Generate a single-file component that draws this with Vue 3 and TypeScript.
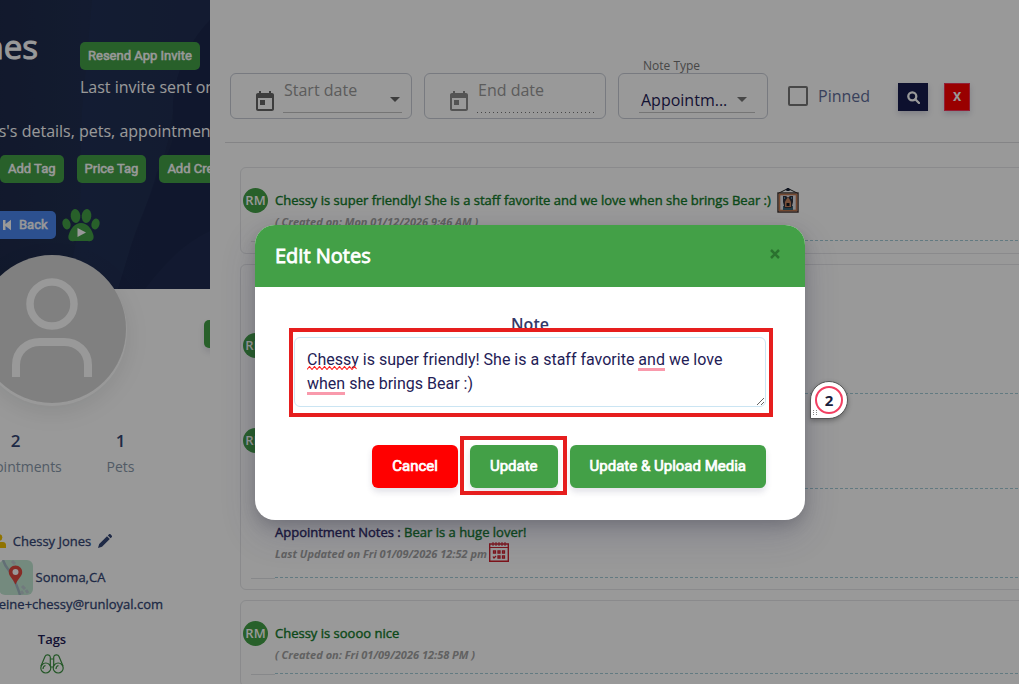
<script setup lang="ts">
import { ref } from 'vue'

interface Entry {
  kind: 'plain' | 'first' | 'middle' | 'last'
  avatar: boolean
  prefix?: string
  title?: string
  meta?: string
  icon?: 'frame' | 'calendar'
}

const cards: Entry[][] = [
  [
    {
      kind: 'plain',
      avatar: true,
      title: 'Chessy is super friendly! She is a staff favorite and we love when she brings Bear :)',
      meta: '( Created on: Mon 01/12/2026 9:46 AM )',
      icon: 'frame',
    },
  ],
  [
    { kind: 'first', avatar: true },
    { kind: 'middle', avatar: true },
    {
      kind: 'last',
      avatar: false,
      prefix: 'Appointment Notes : ',
      title: 'Bear is a huge lover!',
      meta: 'Last Updated on Fri 01/09/2026 12:52 pm',
      icon: 'calendar',
    },
  ],
  [
    {
      kind: 'plain',
      avatar: true,
      title: 'Chessy is soooo nice',
      meta: '( Created on: Fri 01/09/2026 12:58 PM )',
    },
  ],
]

const startDate = ref('')
const endDate = ref('')
const pinned = ref(false)
const note = ref('Chessy is super friendly! She is a staff favorite and we love when she brings Bear :)')
</script>

<template>
  <div class="page">
    <aside class="sidebar">
      <div class="sidebar-inner">
        <header class="hero">
          <svg class="hero-art" viewBox="0 0 210 289" preserveAspectRatio="none" aria-hidden="true">
            <path d="M92 0h118v20C185 45 172 85 173 110c-6 60-32 100-43 139l-12 40H60C88 240 78 170 82 110z" fill="#24345a" opacity=".45" />
            <path d="M210 20C185 45 172 85 173 110c0 22 5 30-16 62-8 30-20 55-27 78l-12 39h92z" fill="#1b274c" opacity=".8" />
            <path d="M145 289c20-26 38-45 65-58v58z" fill="#222f54" opacity=".5" />
          </svg>
          <div class="hero-top">
            <h1>Jones</h1>
            <div class="invite">
              <button type="button" class="btn">Resend App Invite</button>
              <p>Last invite sent on</p>
            </div>
          </div>
          <p class="hero-text">Jones's details, pets, appointments</p>
          <div class="row tags-row">
            <button type="button" class="btn">Add Tag</button>
            <button type="button" class="btn">Price Tag</button>
            <button type="button" class="btn">Add Credit</button>
          </div>
          <div class="row back-row">
            <button type="button" class="btn blue">
              <svg width="9" height="12" viewBox="0 0 9 12" aria-hidden="true"><path d="M0 1h2.500v4L8 .8v10.400L2.500 7v4H0z" fill="#fff" /></svg>
              Back
            </button>
            <svg class="paw" width="38" height="34" viewBox="0 0 38 34" aria-hidden="true">
              <g fill="#43a047">
                <ellipse cx="13.500" cy="8" rx="4.800" ry="7" transform="rotate(-6 13.500 8)" />
                <ellipse cx="24.500" cy="8" rx="4.800" ry="7" transform="rotate(6 24.500 8)" />
                <ellipse cx="4.500" cy="16" rx="4" ry="5.500" transform="rotate(-15 4.500 16)" />
                <ellipse cx="33.500" cy="16" rx="4" ry="5.500" transform="rotate(15 33.500 16)" />
                <path d="M19 15c6 0 10 5 12 11 2 5-1 8-5 7H12c-4 1-7-2-5-7 2-6 6-11 12-11z" />
              </g>
              <path d="M15.500 20l8.500 4.500-8.500 4.500z" fill="#fff" />
            </svg>
          </div>
        </header>

        <div class="portrait">
          <svg viewBox="0 0 148 148" aria-hidden="true">
            <circle cx="74" cy="74" r="74" fill="#d6d6d6" />
            <circle cx="74" cy="49" r="22" fill="none" stroke="#fff" stroke-width="7.500" />
            <path d="M38 122v-12c0-14 11-23 24-23h24c13 0 24 9 24 23v12" fill="none" stroke="#fff" stroke-width="8" />
          </svg>
        </div>
        <button type="button" class="edge-btn" aria-label="Open"></button>

        <dl class="stats">
          <div><dd>2</dd><dt>Appointments</dt></div>
          <div><dd>1</dd><dt>Pets</dt></div>
        </dl>

        <div class="details">
          <div class="line name">
            <svg width="14" height="14" viewBox="0 0 14 14" aria-hidden="true"><circle cx="7" cy="3.500" r="3.300" fill="#f0c000" /><path d="M0 14v-3c0-2 1.500-3 3-3h8c1.500 0 3 1 3 3v3z" fill="#f0c000" /></svg>
            <span>Chessy Jones</span>
            <svg width="14" height="14" viewBox="0 0 14 14" aria-hidden="true"><path d="M9 2.300l2.800 2.800L4 12.800 0 14l1.200-4zM9.800 1.500l1-1c.6-.6 1.300-.6 1.900 0l.9.900c.6.600.6 1.300 0 1.900l-1 1z" fill="#344675" /></svg>
          </div>
          <div class="line place">
            <svg width="34" height="35" viewBox="0 0 34 35" aria-hidden="true">
              <rect width="34" height="35" rx="6" fill="#c2e6d3" />
              <path d="M4 0c3 9 7 10 10 17s5 11 7 18" stroke="#a4b8c4" stroke-width="2.500" fill="none" />
              <path d="M13 1l3 3M23 26l3 3M27 30l2 3M22 31l2 3" stroke="#bccbd0" stroke-width="3" />
              <path d="M16.500 5.500c-4 0-6.700 3-6.700 6.700 0 4 4 6 6.700 12.300 2.700-6.300 6.700-8.300 6.700-12.300 0-3.700-2.700-6.700-6.700-6.700z" fill="#e0483e" />
              <circle cx="16.500" cy="12" r="3" fill="#fff" />
            </svg>
            <span>Sonoma,CA</span>
          </div>
          <a class="line mail" href="mailto:madeleine+chessy@runloyal.com">madeleine+chessy@runloyal.com</a>
          <h2>Tags</h2>
          <svg class="binoculars" width="24" height="20" viewBox="0 0 24 20" fill="none" stroke="#3d9142" stroke-width="1.200" aria-hidden="true">
            <circle cx="5.800" cy="14" r="5" />
            <circle cx="18.200" cy="14" r="5" />
            <path d="M1 12L5 2.500C6 0 10 .5 10.300 3v9M23 12l-4-9.500C18 0 14 .5 13.700 3v9M10.500 5h3M10.800 13h2.400M3 15c0-2 1-3 2.500-3.500M16 15c0-2 1-3 2.500-3.500" />
          </svg>
        </div>
      </div>
    </aside>

    <main class="main">
      <form class="filters" @submit.prevent>
        <label class="field">
          <svg class="cal" width="18" height="20" viewBox="0 0 18 20" aria-hidden="true"><path fill-rule="evenodd" d="M3 0h2v2h8V0h2v2h1c1.100 0 2 .9 2 2v14c0 1.100-.9 2-2 2H2c-1.100 0-2-.9-2-2V4c0-1.100.9-2 2-2h1zM2 7v11h14V7zM4 9h5v5H4z" fill="currentColor" /></svg>
          <input v-model="startDate" type="text" placeholder="Start date" aria-label="Start date" />
          <svg class="caret" width="10" height="5" viewBox="0 0 10 5" aria-hidden="true"><path d="M0 0h10L5 5z" fill="#666" /></svg>
        </label>
        <label class="field disabled">
          <svg class="cal" width="18" height="20" viewBox="0 0 18 20" aria-hidden="true"><path fill-rule="evenodd" d="M3 0h2v2h8V0h2v2h1c1.100 0 2 .9 2 2v14c0 1.100-.9 2-2 2H2c-1.100 0-2-.9-2-2V4c0-1.100.9-2 2-2h1zM2 7v11h14V7zM4 9h5v5H4z" fill="currentColor" /></svg>
          <input v-model="endDate" type="text" placeholder="End date" aria-label="End date" />
          <i class="dots"></i>
        </label>
        <div class="field type-field">
          <label for="note-type">Note Type</label>
          <select id="note-type"><option>Appointm...</option></select>
          <svg class="caret" width="10" height="5" viewBox="0 0 10 5" aria-hidden="true"><path d="M0 0h10L5 5z" fill="#777" /></svg>
        </div>
        <label class="pinned"><input v-model="pinned" type="checkbox" />Pinned</label>
        <button type="submit" class="square search" aria-label="Search">
          <svg width="13" height="13" viewBox="0 0 13 13" fill="none" stroke="#fff" stroke-width="2.300" aria-hidden="true"><circle cx="5.300" cy="5.300" r="4" /><path d="M8.300 8.300L12 12" stroke-linecap="round" /></svg>
        </button>
        <button type="reset" class="square clear">X</button>
      </form>

      <div class="notes">
        <section v-for="(card, c) in cards" :key="c" class="card">
          <article v-for="(entry, e) in card" :key="e" class="entry" :class="entry.kind">
            <span v-if="entry.avatar" class="initials">RM</span>
            <div class="entry-body">
              <p class="entry-title">
                <template v-if="entry.title"><span class="prefix">{{ entry.prefix }}</span>{{ entry.title }}</template>
                <svg v-if="entry.icon === 'frame'" class="frame" width="22" height="25" viewBox="0 0 22 25" aria-hidden="true">
                  <path d="M2 5l7-3.500h4L20 5" fill="none" stroke="#222" stroke-width="1" />
                  <path d="M8.500 2l1.500-2h2l1.500 2-1.500 1h-2z" fill="#182235" />
                  <rect x="1" y="5" width="20" height="19" fill="#e4e4ea" stroke="#382b28" stroke-width="1.400" />
                  <rect x="2.500" y="6.500" width="17" height="16" fill="none" stroke="#c47a50" stroke-width="1.600" />
                  <path d="M6 22v-4h10v4z" fill="#3b6678" />
                  <path d="M6 8h3l2 1.500L13 8h3v6l-1.500 6h-7L6 14z" fill="#31313c" />
                  <path d="M9 12l2-3 2 3 1 2v5H8v-5z" fill="#c98560" />
                  <path d="M9.500 15h3v3h-3z" fill="#15151b" />
                  <path d="M7 9h1v2H7zM14 9h1v2h-1z" fill="#4e88aa" />
                </svg>
              </p>
              <p class="entry-meta">
                {{ entry.meta }}
                <svg v-if="entry.icon === 'calendar'" class="agenda" width="20" height="20" viewBox="0 0 20 20" fill="none" stroke="#d0202c" aria-hidden="true">
                  <path d="M.7 2h18.600v17.300H.7z" stroke-width="1.400" />
                  <path d="M1 5.500h18M4 0v4M7 0v4M10 0v4M13 0v4M16 0v4" />
                  <path d="M4.500 9h2v2h-2zM9 9h2v2H9zM13.500 9h2v2h-2zM9 14h2v2H9zM13.500 14h2v2h-2zM4 14.500l1 1.500 2-2" stroke-width="1.300" />
                </svg>
              </p>
            </div>
          </article>
        </section>
      </div>
    </main>

    <div class="backdrop"></div>

    <div class="dialog" role="dialog" aria-labelledby="dialog-title">
      <header class="dialog-head">
        <h2 id="dialog-title">Edit Notes</h2>
        <button type="button" class="close" aria-label="Close">
          <svg width="10" height="10" viewBox="0 0 10 10" aria-hidden="true"><path d="M1 1l8 8M9 1L1 9" stroke="#2b722f" stroke-width="2.500" /></svg>
        </button>
      </header>
      <form class="dialog-body" @submit.prevent>
        <label for="note">Note</label>
        <div class="editor">
          <textarea id="note" v-model="note" spellcheck="false" rows="2"></textarea>
          <svg class="squiggle" width="52" height="4" viewBox="0 0 52 4" aria-hidden="true"><path d="M0 3.500L2.500.5 5 3.500 7.500.5l2.500 3 2.500-3 2.500 3 2.500-3 2.500 3 2.500-3 2.500 3 2.500-3 2.500 3 2.500-3 2.500 3 2.500-3 2.500 3 2.500-3 2.500 3 2.500-3 2 2.500" fill="none" stroke="#f22" stroke-width="1.100" /></svg>
          <i class="mark mark-and"></i>
          <i class="mark mark-when"></i>
          <i class="outline outline-note"></i>
        </div>
        <div class="actions">
          <button type="button" class="action cancel">Cancel</button>
          <div class="update-wrap">
            <button type="submit" class="action">Update</button>
            <i class="outline outline-update"></i>
          </div>
          <button type="button" class="action">Update &amp; Upload Media</button>
        </div>
      </form>
      <div class="step">
        <span>2</span>
        <svg width="4" height="6" viewBox="0 0 4 6" aria-hidden="true"><path d="M0 0h1v1H0zM3 0h1v1H3zM0 2h1v1H0zM3 2h1v1H3zM0 4h1v1H0zM3 4h1v1H3z" fill="#888" /></svg>
      </div>
    </div>
  </div>
</template>

<style>
body {
  margin: 0;
  background: #fff;
}
</style>

<style scoped>
.page {
  position: relative;
  display: flex;
  height: 100vh;
  overflow: hidden;
  background: #fff;
  font-family: "Open Sans", "Noto Sans", sans-serif;
  font-size: 16px;
  color: #1f2156;
}
h1, h2, p, dl, dd { margin: 0; }
button, input, select, textarea { font: inherit; box-sizing: border-box; }
button { border: 0; cursor: pointer; }

.sidebar {
  flex: none;
  width: 210px;
  overflow: hidden;
}
.sidebar-inner {
  position: relative;
  width: 316px;
  margin-left: -106px;
}
.hero {
  position: relative;
  box-sizing: border-box;
  height: 289px;
  padding-top: 26px;
  background: linear-gradient(90deg, #1b2644, #202e50 60%, #1e2a4c);
  color: #fff;
  white-space: nowrap;
}
.hero-art {
  position: absolute;
  right: 0;
  top: 0;
  width: 210px;
  height: 289px;
}
.hero-top {
  position: relative;
  display: grid;
  grid-template-columns: 144px 1fr;
  column-gap: 42px;
  height: 92px;
}
.hero h1 {
  font-size: 33px;
  line-height: 42px;
  font-weight: 400;
  text-align: right;
  -webkit-text-stroke: 1px currentColor;
}
.invite { padding-top: 16px; }
.invite p {
  margin-top: 5px;
  line-height: 24px;
}
.hero-text {
  position: relative;
  display: flex;
  justify-content: flex-end;
  margin-right: -14px;
  line-height: 26px;
}
.row {
  position: relative;
  display: flex;
  padding-left: 106px;
}
.tags-row { gap: 13px; margin-top: 11px; }
.back-row { gap: 6px; margin-top: 28px; padding-left: 101px; }
.btn {
  flex: none;
  height: 28px;
  padding: 0 8px;
  border-radius: 5px;
  background: #43a047;
  color: #fff;
  font: 400 13px/28px Roboto, sans-serif;
  -webkit-text-stroke: 0.5px currentColor;
}
.btn.blue {
  display: flex;
  align-items: center;
  gap: 7px;
  background: #4a86ee;
}
.paw { margin-top: -3px; }

.portrait {
  position: relative;
  width: 148px;
  height: 148px;
  margin: -34px auto 0;
  border-radius: 50%;
  box-shadow: 0 2px 0 1px #fff, 0 8px 24px rgba(0, 20, 20, .1);
}
.portrait svg { display: block; }
.edge-btn {
  position: absolute;
  right: -24px;
  top: 320px;
  width: 30px;
  height: 28px;
  border-radius: 5px;
  background: #43a047;
  box-shadow: 0 4px 6px rgba(50, 50, 93, .14);
}
.stats {
  display: grid;
  grid-template-columns: 105px 105px;
  margin: 26px 0 0 69px;
  text-align: center;
}
.stats dd {
  font-size: 17px;
  line-height: 24px;
  font-weight: 600;
  color: #344675;
}
.stats dt {
  margin-top: 2px;
  font-size: 14px;
  line-height: 24px;
  color: #8898aa;
}
.details {
  display: flex;
  flex-direction: column;
  align-items: center;
  margin-top: 50px;
  font-size: 13px;
  color: #344675;
}
.line {
  display: flex;
  align-items: center;
  -webkit-text-stroke: 0.3px currentColor;
}
.name { gap: 7px; height: 24px; }
.place { gap: 3px; height: 34px; margin-top: 7px; }
.mail {
  height: 20px;
  padding-left: 20px;
  color: inherit;
  text-decoration: none;
}
.details h2 {
  margin-top: 15px;
  font-size: 13px;
  line-height: 20px;
  font-weight: 600;
  color: #1f2156;
}
.binoculars { margin-top: 5px; }

.main {
  flex: 1;
  min-width: 0;
  padding-left: 15px;
}
.filters {
  display: flex;
  gap: 12px;
  padding: 73px 0 23px 5px;
  border-bottom: 1px solid #dcdde0;
}
.field {
  position: relative;
  flex: none;
  display: flex;
  box-sizing: border-box;
  width: 182px;
  height: 46px;
  padding: 3px 9px 5px 25px;
  border: 1px solid #c8ccd6;
  border-radius: 6px;
}
.cal {
  flex: none;
  margin: 14px 9px 0 0;
  color: #666;
}
.disabled .cal { color: #8c8c8c; }
.field input {
  flex: 1;
  min-width: 0;
  padding: 0 1px 10px;
  border: 0;
  border-bottom: 1px solid #c4c4c4;
  background: none;
  outline: 0;
}
.field.disabled input { border-bottom-color: transparent; }
.dots {
  position: absolute;
  left: 52px;
  right: 9px;
  bottom: 5px;
  height: 1px;
  background: repeating-linear-gradient(90deg, #777 0 1px, transparent 1px 4px);
}
.field input::placeholder { color: #999; opacity: 1; }
.caret {
  position: absolute;
  right: 11px;
  top: 23px;
}
.type-field {
  width: 150px;
  padding: 10px 12px 5px 20px;
}
.type-field label {
  position: absolute;
  left: 24px;
  top: -17px;
  font-size: 12px;
  line-height: 18px;
  color: #777;
}
.type-field select {
  width: 100%;
  padding: 4px 2px 0;
  border: 0;
  border-bottom: 1px solid #c4c4c4;
  appearance: none;
  background: none;
  color: #1f2156;
}
.type-field .caret { right: 20px; }
.pinned {
  display: flex;
  align-items: center;
  gap: 10px;
  margin-left: 8px;
  line-height: 24px;
  color: #606d99;
}
.pinned input {
  width: 20px;
  height: 20px;
  margin: 0;
  appearance: none;
  border: 2px solid #777;
  border-radius: 2px;
}
.square {
  display: grid;
  place-items: center;
  width: 30px;
  height: 28px;
  margin: 10px 0 0 16px;
  padding: 0;
  background: #161c4e;
  color: #fff;
  font: 700 13px/16px Roboto, sans-serif;
  box-shadow: 0 3px 6px rgba(50, 50, 93, .2);
}
.clear {
  width: 26px;
  margin-left: 4px;
  border: 1px solid #f5365c;
  background: #f00;
}

.notes {
  display: flex;
  flex-direction: column;
  gap: 10px;
  margin: 24px -20px 0 15px;
}
.card {
  padding-bottom: 12px;
  border: 1px solid #e6e7ea;
  border-radius: 6px;
}
.entry {
  position: relative;
  display: flex;
  padding: 20px 0 0 34px;
}
.entry::after {
  content: "";
  position: absolute;
  left: 10px;
  bottom: -1px;
  width: 24px;
  border-bottom: 1px solid #e2e3e6;
}
.first::after, .middle::after { content: none; }
.initials {
  flex: none;
  width: 25px;
  height: 25px;
  margin: 0 7px 0 -32px;
  border-radius: 50%;
  background: #43a047;
  color: #fff;
  font-size: 13px;
  line-height: 25px;
  font-weight: 600;
  text-align: center;
}
.entry-body {
  flex: 1;
  height: 52px;
  border-bottom: 1px dashed #a4cbd8;
}
.entry-title {
  display: flex;
  align-items: center;
  height: 24px;
  padding-bottom: 1px;
  font-size: 13px;
  color: #137a2a;
  white-space: pre;
  -webkit-text-stroke: 0.4px currentColor;
}
.prefix { color: #2a2560; }
.frame { margin-left: 6px; }
.entry-meta {
  display: flex;
  gap: 2px;
  height: 17px;
  font-size: 11px;
  line-height: 17px;
  font-style: italic;
  font-weight: 700;
  color: #a2a2a2;
}
.agenda { margin-top: -3px; }
.first { padding-top: 68px; }
.middle { padding-top: 34px; }
.first .entry-body, .middle .entry-body { height: 60px; }
.last {
  margin-bottom: -1px;
  padding-top: 31px;
}
.last .entry-body { height: 57px; }

.backdrop {
  position: absolute;
  inset: 0;
  background: rgba(0, 0, 0, .4);
}
.dialog {
  position: absolute;
  left: 255px;
  top: 225px;
  width: 550px;
  border-radius: 20px;
  background: #fff;
  box-shadow: 0 15px 35px rgba(50, 50, 93, .2), 0 5px 15px rgba(0, 0, 0, .17);
}
.dialog-head {
  display: flex;
  justify-content: space-between;
  height: 62px;
  padding: 0 25px 0 20px;
  border-radius: 20px 20px 0 0;
  background: #43a047;
}
.dialog-head h2 {
  font-size: 20px;
  line-height: 62px;
  font-weight: 400;
  color: #fff;
  -webkit-text-stroke: 0.8px currentColor;
}
.close {
  align-self: flex-start;
  margin-top: 24px;
  padding: 0;
  background: none;
  line-height: 0;
}
.dialog-body {
  padding: 25px 39px 32px;
}
.dialog-body > label {
  display: block;
  font-size: 16px;
  line-height: 24px;
  height: 25px;
  font-weight: 600;
  text-align: center;
  color: #343867;
}
.editor { position: relative; }
textarea {
  display: block;
  width: 100%;
  height: 70px;
  padding: 10px 12px;
  border: 1px solid #cbe5f3;
  border-radius: 6px;
  outline: 0;
  overflow: hidden;
  resize: vertical;
  color: #1f2156;
  font: 400 16px/24px Roboto, sans-serif;
}
.squiggle {
  position: absolute;
  left: 13px;
  top: 29px;
}
.mark {
  position: absolute;
  height: 3px;
  background: #f99aac;
}
.mark-and { left: 344px; top: 31px; width: 27px; }
.mark-when { left: 13px; top: 55px; width: 38px; }
.outline {
  position: absolute;
  border: 4px solid #e61e1e;
  pointer-events: none;
}
.outline-note { inset: -9px -7px -10px -5px; }
.outline-update { inset: -9px -9px -7px -10px; }
.actions {
  display: flex;
  justify-content: flex-end;
  gap: 12px;
  margin-top: 38px;
}
.update-wrap { position: relative; }
.action {
  height: 43px;
  padding: 0 20px;
  border-radius: 6px;
  background: #43a047;
  color: #fff;
  font: 400 15px/43px Roboto, sans-serif;
  -webkit-text-stroke: 0.7px currentColor;
  box-shadow: 0 4px 6px rgba(50, 50, 93, .14);
}
.cancel { background: #f00; }
.step {
  position: absolute;
  left: 555px;
  top: 156px;
  display: grid;
  place-items: center;
  box-sizing: border-box;
  width: 38px;
  height: 38px;
  border: 1px solid #555;
  border-radius: 19px 19px 19px 0;
  background: #fff;
  box-shadow: 0 2px 5px rgba(0, 0, 0, .3);
}
.step span {
  box-sizing: border-box;
  width: 28px;
  height: 28px;
  border: 2px solid #f23f61;
  border-radius: 50%;
  color: #18203c;
  font: 700 15px/24px "Open Sans", sans-serif;
  text-align: center;
}
.step svg {
  position: absolute;
  left: 2px;
  bottom: 2px;
}
</style>
